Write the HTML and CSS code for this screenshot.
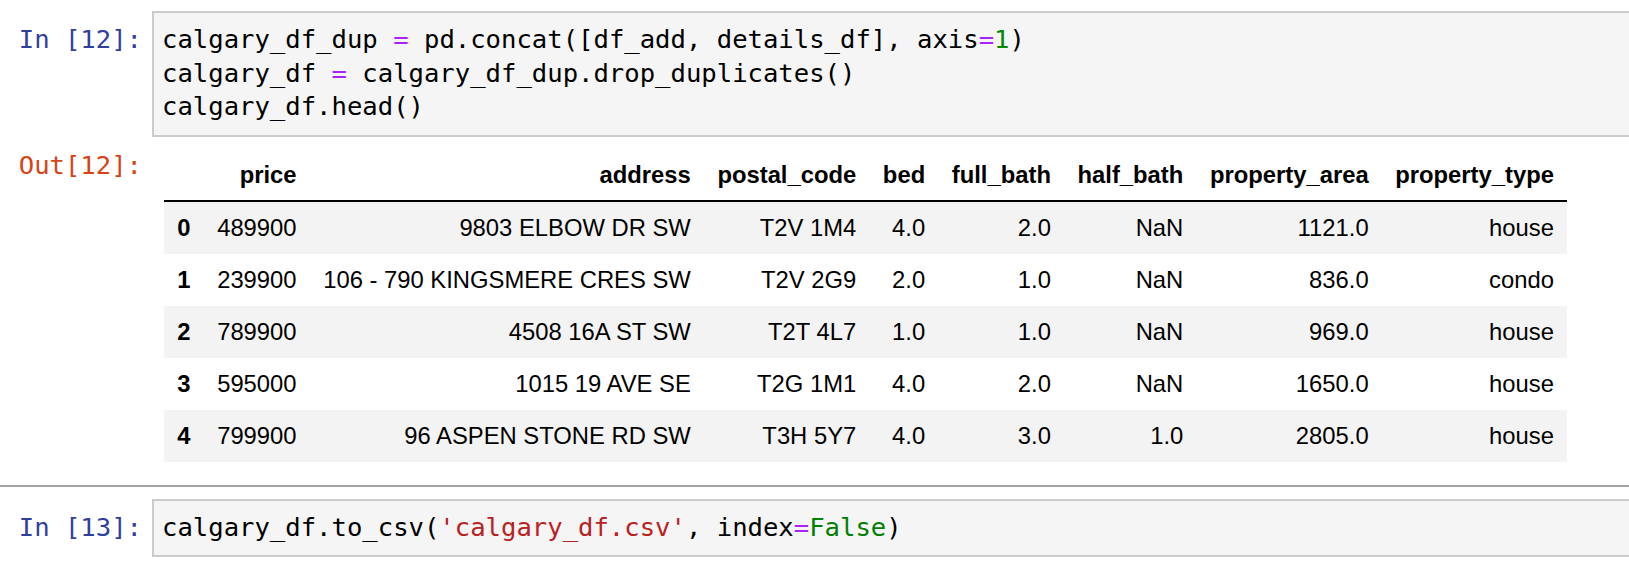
FILE: index.html
```html
<!DOCTYPE html>
<html>
<head>
<meta charset="utf-8">
<link rel="stylesheet" href="styles.css">
</head>
<body>
<div class="notebook">
  <div class="cell first">
    <div class="row input">
      <div class="prompt in-prompt">In&nbsp;[12]:</div>
      <div class="code"><div>calgary_df_dup <span class="op">=</span> pd.concat([df_add, details_df], axis<span class="op">=</span><span class="num">1</span>)</div><div>calgary_df <span class="op">=</span> calgary_df_dup.drop_duplicates()</div><div>calgary_df.head()</div></div>
    </div>
    <div class="row output">
      <div class="prompt out-prompt">Out[12]:</div>
      <div class="out-area">
        <table class="df">
          <thead>
            <tr><th></th><th>price</th><th>address</th><th>postal_code</th><th>bed</th><th>full_bath</th><th>half_bath</th><th>property_area</th><th>property_type</th></tr>
          </thead>
          <tbody>
            <tr><th>0</th><td>489900</td><td>9803 ELBOW DR SW</td><td>T2V 1M4</td><td>4.0</td><td>2.0</td><td>NaN</td><td>1121.0</td><td>house</td></tr>
            <tr><th>1</th><td>239900</td><td>106 - 790 KINGSMERE CRES SW</td><td>T2V 2G9</td><td>2.0</td><td>1.0</td><td>NaN</td><td>836.0</td><td>condo</td></tr>
            <tr><th>2</th><td>789900</td><td>4508 16A ST SW</td><td>T2T 4L7</td><td>1.0</td><td>1.0</td><td>NaN</td><td>969.0</td><td>house</td></tr>
            <tr><th>3</th><td>595000</td><td>1015 19 AVE SE</td><td>T2G 1M1</td><td>4.0</td><td>2.0</td><td>NaN</td><td>1650.0</td><td>house</td></tr>
            <tr><th>4</th><td>799900</td><td>96 ASPEN STONE RD SW</td><td>T3H 5Y7</td><td>4.0</td><td>3.0</td><td>1.0</td><td>2805.0</td><td>house</td></tr>
          </tbody>
        </table>
      </div>
    </div>
  </div>
  <div class="sep"></div>
  <div class="cell second">
    <div class="row input">
      <div class="prompt in-prompt">In&nbsp;[13]:</div>
      <div class="code"><div>calgary_df.to_csv(<span class="str">'calgary_df.csv'</span>, index<span class="op">=</span><span class="kw">False</span>)</div></div>
    </div>
  </div>
</div>
</body>
</html>
```

FILE: styles.css
```css
html, body {
  margin: 0;
  padding: 0;
  background: #ffffff;
  overflow: hidden;
}

.notebook {
  width: 1629px;
}

.cell.first {
  padding-top: 11px;
}

.cell.second {
  padding-top: 12px;
}

.row {
  display: flex;
  align-items: flex-start;
}

.prompt {
  width: 152px;
  flex: 0 0 152px;
  box-sizing: border-box;
  padding-right: 10px;
  text-align: right;
  font-family: "DejaVu Sans Mono", monospace;
  font-size: 25.6px;
  line-height: 33.5px;
  white-space: nowrap;
}

.in-prompt {
  color: #303f9f;
  padding-top: 12px;
}

.out-prompt {
  color: #d84315;
  padding-top: 0;
}

.code {
  flex: 1 1 auto;
  background: #f5f5f5;
  border: 2px solid #cbcbcb;
  border-right: none;
  padding: 10px 8px 11px 8px;
  font-family: "DejaVu Sans Mono", monospace;
  font-size: 25.6px;
  line-height: 33.5px;
  color: #000000;
  white-space: pre;
}

.op {
  color: #aa22ff;
}

.num {
  color: #008800;
}

.str {
  color: #ba2121;
}

.kw {
  color: #008000;
}

.output {
  margin-top: 12px;
}

.out-area {
  padding-left: 12px;
}

.df {
  border-collapse: collapse;
  border-spacing: 0;
  font-family: "Liberation Sans", Arial, sans-serif;
  font-size: 23.8px;
  line-height: 28px;
  color: #000000;
}

.df th,
.df td {
  padding: 12px 13.3px;
  text-align: right;
  vertical-align: middle;
  white-space: nowrap;
}

.df th {
  font-weight: bold;
}

.df thead th {
  padding-bottom: 11px;
  border-bottom: 2px solid #000000;
}

.df tbody tr:nth-child(odd) {
  background: #f3f3f3;
}

.sep {
  margin-top: 23px;
  height: 2px;
  background: #a3a3a3;
}
```
